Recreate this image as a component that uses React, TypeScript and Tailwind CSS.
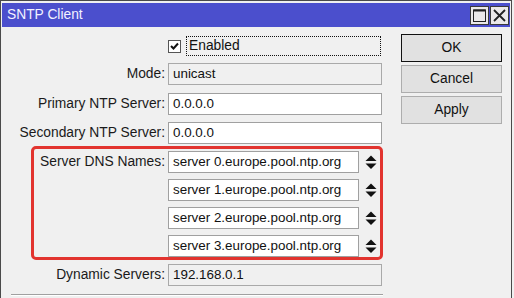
const FONT = "font-['Liberation_Sans',Arial,sans-serif]";

function Field({ value, disabled, w = 'w-[214px]' }: { value: string; disabled?: boolean; w?: string }) {
  return (
    <div
      className={`${w} h-[22px] flex items-center pl-[4px] border text-[13.4px] text-[#111] whitespace-nowrap ${
        disabled ? 'bg-[#f0f0f0] border-[#a9a9a9]' : 'bg-white border-[#a0a0a0]'
      }`}
    >
      {value}
    </div>
  );
}

function Row({ label, children, className = '' }: { label: string; children: React.ReactNode; className?: string }) {
  return (
    <div className={`flex items-center ${className}`}>
      <div className="w-[163px] text-right text-[13.8px] text-[#1a1a1a] whitespace-nowrap">{label}</div>
      <div className="ml-[3px]">{children}</div>
    </div>
  );
}

function Spinner() {
  return (
    <svg width="12" height="15" viewBox="0 0 12 15" className="ml-[6px]">
      <polygon points="6,0.5 11.5,6 0.5,6" fill="#111" />
      <polygon points="0.5,8.5 11.5,8.5 6,14" fill="#111" />
    </svg>
  );
}

function Button({ label, primary }: { label: string; primary?: boolean }) {
  return (
    <div
      className={`h-[28px] w-[101px] flex items-center justify-center bg-[#e1e1e1] border text-[13.8px] text-[#111] ${
        primary ? 'border-[#111]' : 'border-[#adadad]'
      }`}
    >
      {label}
    </div>
  );
}

export default function App() {
  const dns = [
    'server 0.europe.pool.ntp.org',
    'server 1.europe.pool.ntp.org',
    'server 2.europe.pool.ntp.org',
    'server 3.europe.pool.ntp.org',
  ];

  return (
    <div className={`w-[514px] h-[298px] overflow-hidden bg-[#f0f0f0] ${FONT}`}>
      <div className="w-[512px] h-[298px] border-x border-t border-[#4a4a4a] px-px pt-[2px] flex flex-col">
        {/* title bar */}
        <div className="h-[24px] bg-[#4b4fcd] flex items-center pl-[5px] pr-px">
          <span className="text-[13.8px] text-[#f2f2ff]">SNTP Client</span>
          <div className="ml-auto flex gap-px">
            <div className="w-[19px] h-[19px] bg-[#ebe9e9] border border-[#3a3a3a] flex items-center justify-center">
              <svg width="13" height="13" viewBox="0 0 13 13">
                <rect x="0.5" y="1" width="12" height="11.5" fill="none" stroke="#222" strokeWidth="1" />
                <rect x="0.5" y="0.5" width="12" height="2" fill="#222" />
              </svg>
            </div>
            <div className="w-[19px] h-[19px] bg-[#ebe9e9] border border-[#3a3a3a] flex items-center justify-center">
              <svg width="13" height="13" viewBox="0 0 13 13">
                <path d="M1 1 L12 12 M12 1 L1 12" stroke="#222" strokeWidth="1.8" />
              </svg>
            </div>
          </div>
        </div>

        {/* body */}
        <div className="flex flex-1">
          <div className="w-[381px] flex flex-col">
            <div className="mt-[9px] h-[20px] flex items-center">
              <div className="ml-[166px] w-[13px] h-[13px] bg-white border border-[#555] flex items-center justify-center">
                <svg width="9" height="8" viewBox="0 0 9 8">
                  <path d="M1 4 L3.5 6.5 L8 1.5" fill="none" stroke="#111" strokeWidth="2" />
                </svg>
              </div>
              <div className="ml-[5px] w-[195px] h-[20px] border border-dotted border-[#111] flex items-center pl-[2px] text-[13.8px] text-[#111]">
                Enabled
              </div>
            </div>

            <Row label="Mode:" className="mt-[7px]">
              <Field value="unicast" disabled />
            </Row>
            <Row label="Primary NTP Server:" className="mt-[8px]">
              <Field value="0.0.0.0" />
            </Row>
            <Row label="Secondary NTP Server:" className="mt-[7px]">
              <Field value="0.0.0.0" />
            </Row>

            <div className="mt-[2px] ml-[29px] w-[352px] h-[114px] border-[3px] border-[#e2342f] rounded-[5px] pt-[2px] flex flex-col gap-[6px]">
              {dns.map((d, i) => (
                <div key={d} className="flex items-center">
                  <div className="w-[131px] text-right text-[13.8px] text-[#1a1a1a] whitespace-nowrap">
                    {i === 0 ? 'Server DNS Names:' : ''}
                  </div>
                  <div className="ml-[3px] flex items-center">
                    <Field value={d} w="w-[191px]" />
                    <Spinner />
                  </div>
                </div>
              ))}
            </div>

            <Row label="Dynamic Servers:" className="mt-[4px]">
              <Field value="192.168.0.1" disabled />
            </Row>

            <div className="mt-[8px] ml-[9px] w-[372px] h-px bg-[#a0a0a0]" />
            <div className="ml-[9px] w-[372px] h-px bg-white" />
          </div>

          <div className="ml-[18px] pt-[7px] flex flex-col gap-[3px]">
            <Button label="OK" primary />
            <Button label="Cancel" />
            <Button label="Apply" />
          </div>
        </div>
      </div>
    </div>
  );
}
